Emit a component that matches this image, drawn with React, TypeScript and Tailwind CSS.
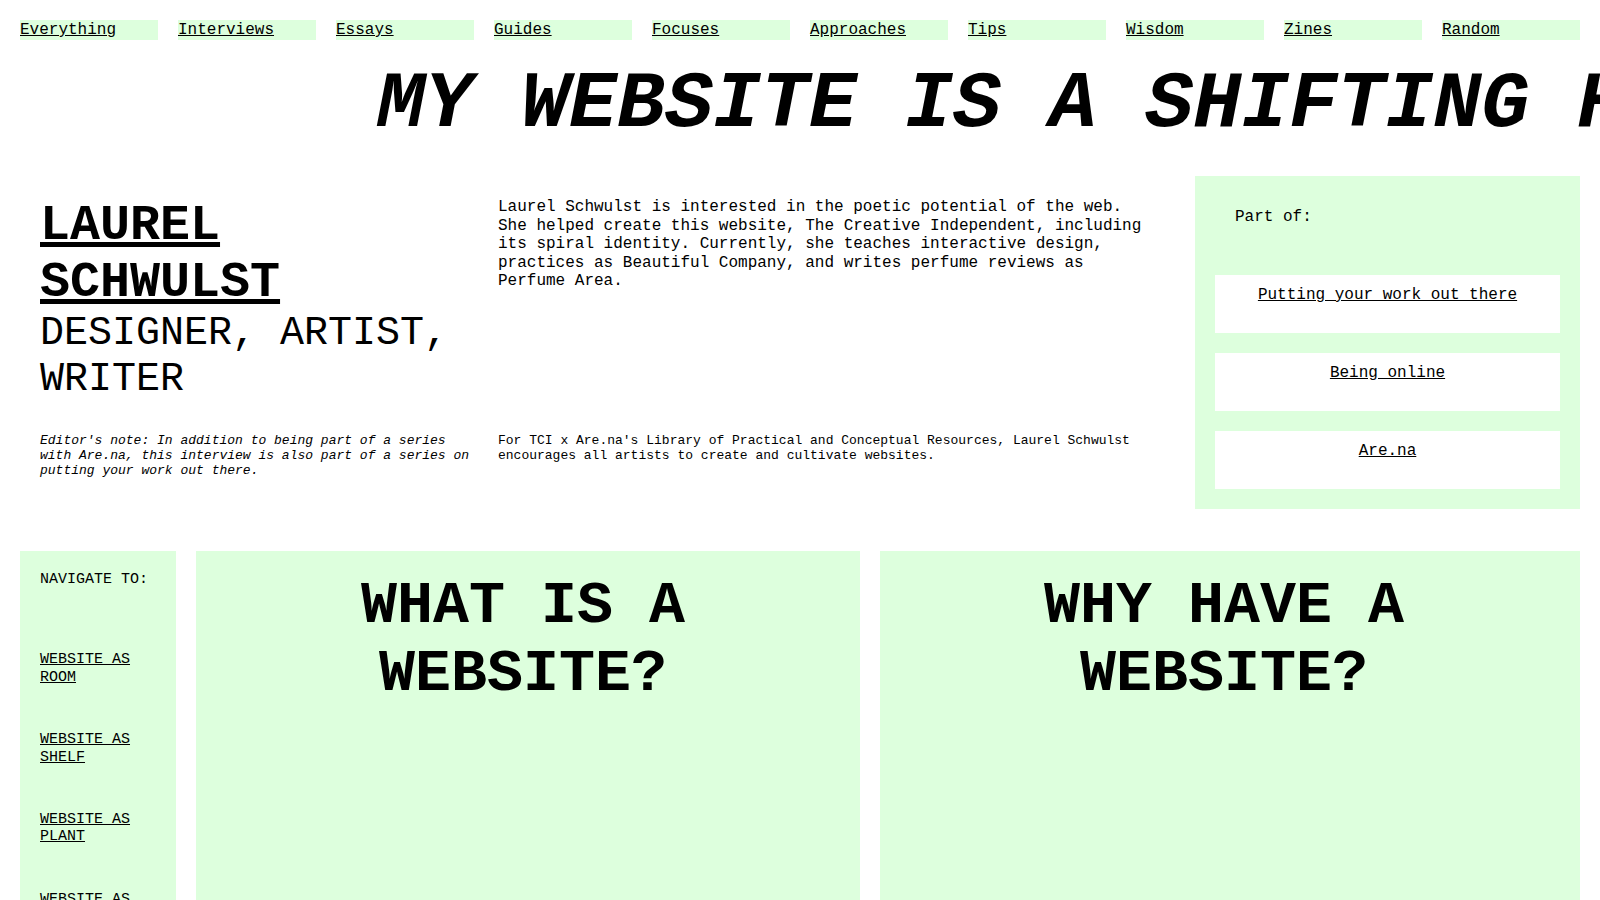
import React from "react";

const navItems = [
  "Everything",
  "Interviews",
  "Essays",
  "Guides",
  "Focuses",
  "Approaches",
  "Tips",
  "Wisdom",
  "Zines",
  "Random",
];

const sideLinks = [
  "WEBSITE AS ROOM",
  "WEBSITE AS SHELF",
  "WEBSITE AS PLANT",
  "WEBSITE AS HOUSE",
];

export default function App() {
  return (
    <div
      className="h-[900px] w-[1600px] overflow-hidden bg-white text-black"
      style={{ fontFamily: '"Liberation Mono", "Courier New", monospace' }}
    >
      {/* Top nav */}
      <nav className="flex gap-5 px-5 pt-5">
        {navItems.map((n) => (
          <div key={n} className="h-5 flex-1 bg-[#ddffdd] pt-px text-[16px] leading-[18px]">
            <a href="#" className="underline">
              {n}
            </a>
          </div>
        ))}
      </nav>

      {/* Headline */}
      <div className="h-[136px] overflow-hidden whitespace-nowrap pl-[377px] pt-[25px]">
        <h1 className="text-[80px] font-bold italic leading-[80px]">
          MY WEBSITE IS A SHIFTING HOUSE NEXT TO A RIVER OF KNOWLEDGE
        </h1>
      </div>

      {/* Bio section */}
      <section className="flex h-[375px] items-start px-5">
        <div className="grid grid-cols-[458px_648px] gap-x-5 gap-y-[32px] pt-[22px]">
          <div className="pl-5">
            <h2 className="text-[50px] font-bold leading-[56.5px] underline">
              LAUREL
              <br />
              SCHWULST
            </h2>
            <div className="text-[40px] leading-[45.5px]">DESIGNER, ARTIST, WRITER</div>
          </div>
          <p className="text-[16px] leading-[18.5px]">
            Laurel Schwulst is interested in the poetic potential of the web. She helped create
            this website, The Creative Independent, including its spiral identity. Currently, she
            teaches interactive design, practices as Beautiful Company, and writes perfume reviews
            as Perfume Area.
          </p>
          <p className="pl-5 text-[13px] italic leading-[14.8px]">
            Editor's note: In addition to being part of a series with Are.na, this interview is
            also part of a series on putting your work out there.
          </p>
          <p className="text-[13px] leading-[14.8px]">
            For TCI x Are.na's Library of Practical and Conceptual Resources, Laurel Schwulst
            encourages all artists to create and cultivate websites.
          </p>
        </div>

        <aside className="ml-auto flex w-[385px] flex-col bg-[#ddffdd] p-5">
          <div className="h-[79px] pl-5 pt-[12px] text-[16px] leading-[18px]">Part of:</div>
          <div className="flex flex-col gap-5">
            {["Putting your work out there", "Being online", "Are.na"].map((t) => (
              <div
                key={t}
                className="h-[58px] bg-white pt-[11px] text-center text-[16px] leading-[18px]"
              >
                <a href="#" className="underline">
                  {t}
                </a>
              </div>
            ))}
          </div>
        </aside>
      </section>

      {/* Content section */}
      <section className="flex h-[349px] gap-5 px-5">
        <div className="w-[156px] shrink-0 bg-[#ddffdd] px-5 pt-5">
          <div className="text-[15px] leading-[17.4px]">NAVIGATE TO:</div>
          <div className="mt-[63px] flex flex-col gap-[45px]">
            {sideLinks.map((l) => (
              <a key={l} href="#" className="text-[15px] leading-[17.4px] underline">
                {l}
              </a>
            ))}
          </div>
        </div>

        <div className="w-[664px] shrink-0 bg-[#ddffdd] pl-5 pr-[30px] pt-[21px] text-center">
          <h3 className="text-[60px] font-bold leading-[68px]">WHAT IS A WEBSITE?</h3>
        </div>

        <div className="flex-1 bg-[#ddffdd] pl-5 pr-[32px] pt-[21px] text-center">
          <h3 className="text-[60px] font-bold leading-[68px]">WHY HAVE A WEBSITE?</h3>
        </div>
      </section>
    </div>
  );
}
